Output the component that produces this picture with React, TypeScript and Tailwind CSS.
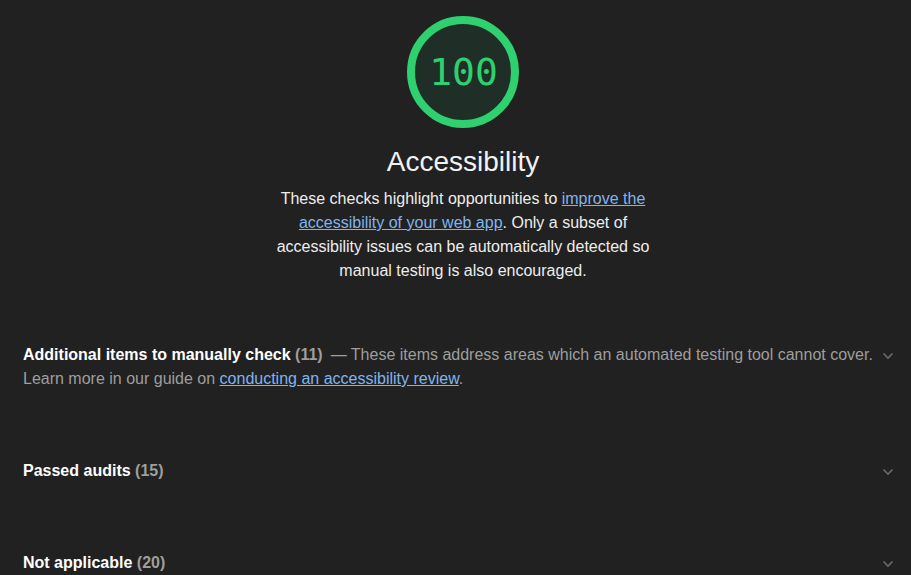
import React from 'react'

function Chevron() {
  return (
    <svg width="12" height="8" viewBox="0 0 12 8" className="shrink-0 mt-[9px] mr-[9px]">
      <path d="M1.5 1.5l4.5 4.5 4.5-4.5" fill="none" stroke="#6b6b6b" strokeWidth="1.6" />
    </svg>
  )
}

function Gauge({ score }: { score: number }) {
  return (
    <div className="relative w-[112px] h-[112px] mt-[16px]">
      <svg width="112" height="112" viewBox="0 0 112 112" className="absolute inset-0">
        <circle cx="56" cy="56" r="52" fill="#1f2e26" stroke="#2fd06f" strokeWidth="8" />
      </svg>
      <div className="absolute inset-0 flex items-center justify-center pl-[1px] text-[38px] text-[#2fd06f] font-['DejaVu_Sans_Mono',monospace]">
        {score}
      </div>
    </div>
  )
}

function Group({ title, count, children }: { title: string; count: number; children?: React.ReactNode }) {
  return (
    <div className="flex justify-between items-start gap-2">
      <div className="text-[16px] leading-[24px]">
        <span className="font-bold text-white">{title}</span>{' '}
        <span className="font-bold text-[#9e9e9e]">({count})</span>
        {children}
      </div>
      <Chevron />
    </div>
  )
}

export default function App() {
  return (
    <div className="min-h-[575px] bg-[#212121] font-['Liberation_Sans',Arial,sans-serif] pl-[23px] pr-[8px] overflow-hidden">
      <div className="flex flex-col items-center">
        <Gauge score={100} />
        <h1 className="mt-[15px] text-[28px] leading-[38px] text-[#f2f2f2]">Accessibility</h1>
        <p className="mt-[6px] max-w-[390px] text-center text-[16px] leading-[24px] text-[#ededed]">
          These checks highlight opportunities to{' '}
          <a className="text-[#80b4ee] underline">improve the accessibility of your web app</a>. Only a subset of
          accessibility issues can be automatically detected so manual testing is also encouraged.
        </p>
      </div>

      <div className="mt-[60px]">
        <Group title="Additional items to manually check" count={11}>
          <span className="ml-[8px] text-[#9e9e9e]">
            — These items address areas which an automated testing tool cannot cover. Learn more in our guide on{' '}
            <a className="text-[#80b4ee] underline">conducting an accessibility review</a>.
          </span>
        </Group>
      </div>

      <div className="mt-[68px]">
        <Group title="Passed audits" count={15} />
      </div>

      <div className="mt-[68px]">
        <Group title="Not applicable" count={20} />
      </div>
    </div>
  )
}
